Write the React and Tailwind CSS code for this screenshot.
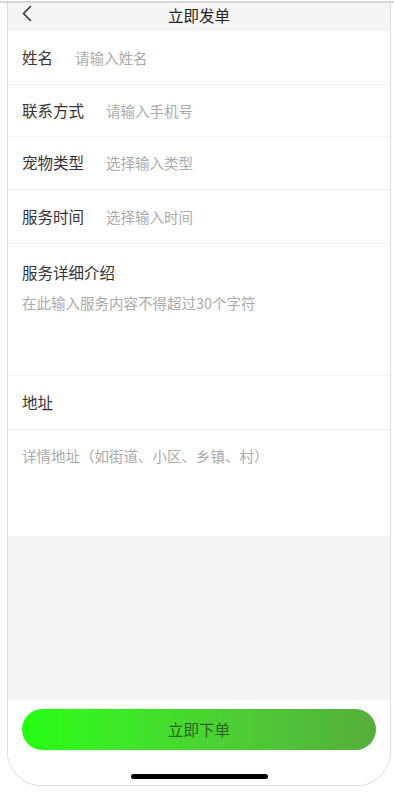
import React from 'react';

const fields = [
  { label: '姓名', placeholder: '请输入姓名', h: 'h-[54px]' },
  { label: '联系方式', placeholder: '请输入手机号', h: 'h-[52px]' },
  { label: '宠物类型', placeholder: '选择输入类型', h: 'h-[53px]' },
  { label: '服务时间', placeholder: '选择输入时间', h: 'h-[54px]' },
];

function Row({ label, placeholder, h }) {
  return (
    <div className={`flex items-center gap-[22px] pl-[14px] border-b border-[#f1f1f1] ${h}`}>
      <span className="text-[15.5px] text-[#333]">{label}</span>
      <span className="text-[14.5px] text-[#ababab]">{placeholder}</span>
    </div>
  );
}

export default function App() {
  return (
    <div
      className="w-[394px] h-[792px] bg-white overflow-hidden"
      style={{ fontFamily: '"Noto Sans CJK SC", "Noto Sans", sans-serif' }}
    >
      <div className="mt-px h-[2px] bg-[#d6d6d6]" />
      <div className="ml-[7px] mr-[3px] h-[783px] flex flex-col border-x border-b border-[#dedede] rounded-b-[34px] overflow-hidden">
        {/* nav */}
        <div className="relative h-[28px] shrink-0 bg-[#f5f5f5] flex items-center justify-center">
          <svg className="absolute left-[14px] top-[2px]" width="10" height="17" viewBox="0 0 10 17" fill="none">
            <polyline points="8.5,1.5 1.5,8.5 8.5,15.5" stroke="#333" strokeWidth="1.6" strokeLinecap="round" strokeLinejoin="round" />
          </svg>
          <span className="text-[15.5px] text-[#222] leading-none -mt-[3px]">立即发单</span>
        </div>

        {fields.map((f) => (
          <Row key={f.label} {...f} />
        ))}

        {/* description */}
        <div className="h-[132px] shrink-0 pl-[14px] pt-[17px] border-b border-[#f1f1f1]">
          <div className="text-[15.5px] text-[#333] leading-[22px]">服务详细介绍</div>
          <div className="mt-[10px] text-[14.5px] text-[#ababab] leading-[20px]">在此输入服务内容不得超过30个字符</div>
        </div>

        {/* address */}
        <div className="h-[54px] shrink-0 flex items-center pl-[14px] border-b border-[#f1f1f1]">
          <span className="text-[15.5px] text-[#333]">地址</span>
        </div>
        <div className="h-[106px] shrink-0 pl-[14px] pt-[16px]">
          <div className="text-[14.5px] text-[#ababab] leading-[20px]">详情地址（如街道、小区、乡镇、村）</div>
        </div>

        <div className="flex-1 bg-[#f4f4f4]" />

        {/* bottom bar */}
        <div className="h-[85px] shrink-0 bg-white flex flex-col items-center pt-[9px]">
          <button className="w-[354px] h-[41px] rounded-full bg-gradient-to-r from-[#22ff0f] to-[#55ae3c] text-[15.5px] text-[#2f5f24]">
            立即下单
          </button>
          <div className="mt-[24px] w-[137px] h-[5px] rounded-full bg-black" />
        </div>
      </div>
    </div>
  );
}
